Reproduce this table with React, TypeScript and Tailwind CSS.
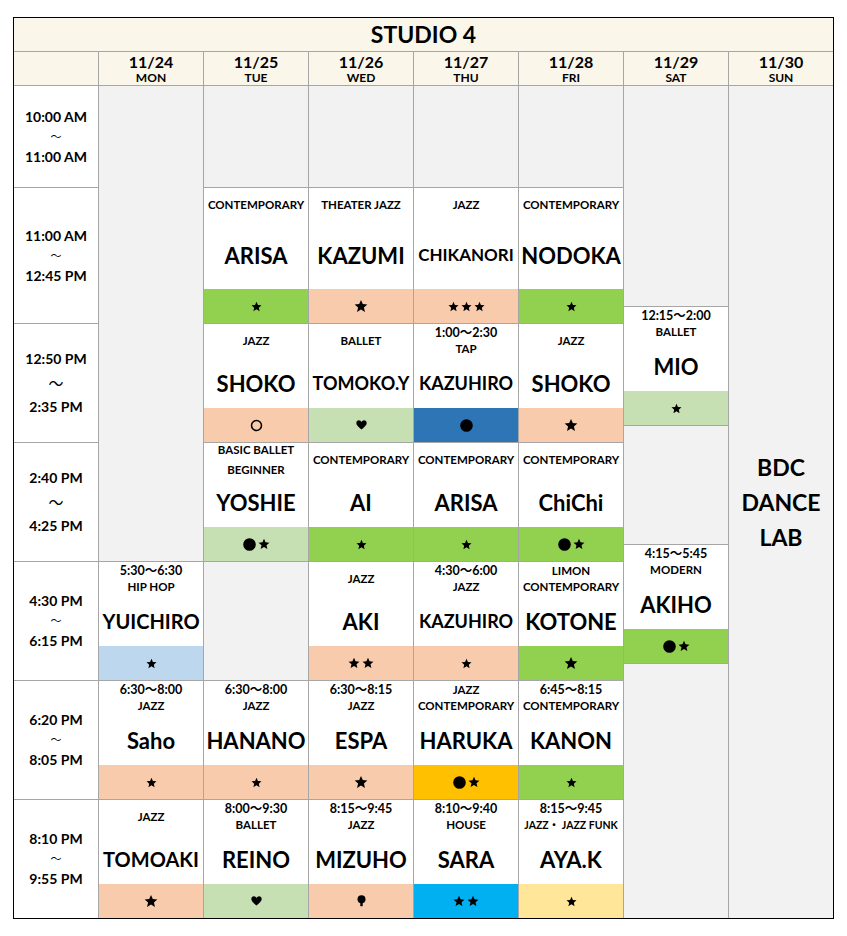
import React from 'react';

type Sym = 's' | 'm' | 'S' | 'dot' | 'ring' | 'heart' | 'balloon';

type Cell = {
  h: string;
  empty?: boolean;
  top?: string[];
  name?: string;
  size?: string;
  band?: string;
  syms?: Sym[];
  tall?: boolean;
  loose?: boolean;
  narrow?: boolean;
};

type Day = { date: string; dow: string; cells: Cell[] };

// row heights (border included)
const R1 = 'h-[102px]';
const R2 = 'h-[136px]';
const R = 'h-[119px]';
const RL = 'h-[118px]';

const PEACH = 'bg-[#f8cbad]';
const GREEN = 'bg-[#92d050]';
const LGREEN = 'bg-[#c6e0b4]';

const SMALL = 'text-[18px]';
const MID = 'text-[20px]';

const days: Day[] = [
  {
    date: '11/24',
    dow: 'MON',
    cells: [
      { h: 'h-[476px]', empty: true },
      { h: R, top: ['5:30～6:30', 'HIP HOP'], name: 'YUICHIRO', size: MID, band: 'bg-[#bdd7ee]', syms: ['s'] },
      { h: R, top: ['6:30～8:00', 'JAZZ'], name: 'Saho', band: PEACH, syms: ['s'] },
      { h: RL, top: ['JAZZ'], name: 'TOMOAKI', size: MID, band: PEACH, syms: ['S'] },
    ],
  },
  {
    date: '11/25',
    dow: 'TUE',
    cells: [
      { h: R1, empty: true },
      { h: R2, tall: true, top: ['CONTEMPORARY'], name: 'ARISA', band: GREEN, syms: ['s'] },
      { h: R, top: ['JAZZ'], name: 'SHOKO', band: PEACH, syms: ['ring'] },
      { h: R, loose: true, top: ['BASIC BALLET', 'BEGINNER'], name: 'YOSHIE', band: LGREEN, syms: ['dot', 'm'] },
      { h: R, empty: true },
      { h: R, top: ['6:30～8:00', 'JAZZ'], name: 'HANANO', band: PEACH, syms: ['s'] },
      { h: RL, top: ['8:00～9:30', 'BALLET'], name: 'REINO', band: LGREEN, syms: ['heart'] },
    ],
  },
  {
    date: '11/26',
    dow: 'WED',
    cells: [
      { h: R1, empty: true },
      { h: R2, tall: true, top: ['THEATER JAZZ'], name: 'KAZUMI', band: PEACH, syms: ['S'] },
      { h: R, top: ['BALLET'], name: 'TOMOKO.Y', size: SMALL, band: LGREEN, syms: ['heart'] },
      { h: R, top: ['CONTEMPORARY'], name: 'AI', band: GREEN, syms: ['s'] },
      { h: R, top: ['JAZZ'], name: 'AKI', band: PEACH, syms: ['m', 'm'] },
      { h: R, top: ['6:30～8:15', 'JAZZ'], name: 'ESPA', band: PEACH, syms: ['S'] },
      { h: RL, top: ['8:15～9:45', 'JAZZ'], name: 'MIZUHO', band: PEACH, syms: ['balloon'] },
    ],
  },
  {
    date: '11/27',
    dow: 'THU',
    cells: [
      { h: R1, empty: true },
      { h: R2, tall: true, top: ['JAZZ'], name: 'CHIKANORI', size: 'text-[17px]', band: PEACH, syms: ['s', 's', 's'] },
      { h: R, top: ['1:00～2:30', 'TAP'], name: 'KAZUHIRO', size: SMALL, band: 'bg-[#2e75b6]', syms: ['dot'] },
      { h: R, top: ['CONTEMPORARY'], name: 'ARISA', band: GREEN, syms: ['s'] },
      { h: R, top: ['4:30～6:00', 'JAZZ'], name: 'KAZUHIRO', size: SMALL, band: PEACH, syms: ['s'] },
      { h: R, top: ['JAZZ', 'CONTEMPORARY'], name: 'HARUKA', band: 'bg-[#ffc000]', syms: ['dot', 'm'] },
      { h: RL, top: ['8:10～9:40', 'HOUSE'], name: 'SARA', band: 'bg-[#00b0f0]', syms: ['m', 'm'] },
    ],
  },
  {
    date: '11/28',
    dow: 'FRI',
    cells: [
      { h: R1, empty: true },
      { h: R2, tall: true, top: ['CONTEMPORARY'], name: 'NODOKA', band: GREEN, syms: ['s'] },
      { h: R, top: ['JAZZ'], name: 'SHOKO', band: PEACH, syms: ['S'] },
      { h: R, top: ['CONTEMPORARY'], name: 'ChiChi', band: GREEN, syms: ['dot', 'm'] },
      { h: R, top: ['LIMON', 'CONTEMPORARY'], name: 'KOTONE', band: GREEN, syms: ['S'] },
      { h: R, top: ['6:45～8:15', 'CONTEMPORARY'], name: 'KANON', band: GREEN, syms: ['s'] },
      { h: RL, narrow: true, top: ['8:15～9:45', 'JAZZ・ JAZZ FUNK'], name: 'AYA.K', band: 'bg-[#ffe699]', syms: ['s'] },
    ],
  },
  {
    date: '11/29',
    dow: 'SAT',
    cells: [
      { h: 'h-[221px]', empty: true },
      { h: R, top: ['12:15～2:00', 'BALLET'], name: 'MIO', band: LGREEN, syms: ['s'] },
      { h: R, empty: true },
      { h: R, top: ['4:15～5:45', 'MODERN'], name: 'AKIHO', band: GREEN, syms: ['dot', 'm'] },
      { h: 'h-[254px]', empty: true },
    ],
  },
];

const times: { h: string; from: string; to: string; loose?: boolean }[] = [
  { h: R1, from: '10:00 AM', to: '11:00 AM' },
  { h: R2, from: '11:00 AM', to: '12:45 PM' },
  { h: R, from: '12:50 PM', to: '2:35 PM', loose: true },
  { h: R, from: '2:40 PM', to: '4:25 PM', loose: true },
  { h: R, from: '4:30 PM', to: '6:15 PM' },
  { h: R, from: '6:20 PM', to: '8:05 PM' },
  { h: RL, from: '8:10 PM', to: '9:55 PM' },
];

const STAR = 'M12 1.5l3.1 7.2 7.8.7-5.9 5.1 1.8 7.7L12 18.1l-6.8 4.1 1.8-7.7-5.9-5.1 7.8-.7z';

const Symbol = ({ s }: { s: Sym }) => {
  if (s === 's' || s === 'm' || s === 'S') {
    const cls = s === 's' ? 'w-[11px] h-[11px]' : s === 'm' ? 'w-[12px] h-[12px]' : 'w-[14px] h-[14px]';
    return (
      <svg className={cls} viewBox="0 0 24 24">
        <path d={STAR} fill="#000" />
      </svg>
    );
  }
  if (s === 'dot') {
    return (
      <svg className="w-[13px] h-[13px]" viewBox="0 0 12 12">
        <circle cx="6" cy="6" r="5.8" fill="#000" />
      </svg>
    );
  }
  if (s === 'ring') {
    return (
      <svg className="w-[13px] h-[13px]" viewBox="0 0 12 12">
        <circle cx="6" cy="6" r="4.6" fill="none" stroke="#000" strokeWidth="1.4" />
      </svg>
    );
  }
  if (s === 'heart') {
    return (
      <svg className="w-[11px] h-[10px]" viewBox="0 0 12 11">
        <path d="M6 10.5C2 7.2 0.3 5.4 0.3 3.3 0.3 1.6 1.6 0.4 3.1 0.4c1.3 0 2.2.8 2.9 1.8C6.7 1.2 7.6.4 8.9.4c1.5 0 2.8 1.2 2.8 2.9 0 2.1-1.7 3.9-5.7 7.2z" fill="#000" />
      </svg>
    );
  }
  return (
    <svg className="w-[9px] h-[12px]" viewBox="0 0 9 12">
      <circle cx="4.5" cy="4.2" r="4" fill="#000" />
      <rect x="3.3" y="7" width="2.4" height="4.2" fill="#000" />
    </svg>
  );
};

const ClassCell = ({ c }: { c: Cell }) => {
  if (c.empty) {
    return <div className={`${c.h} bg-[#f2f2f2] border-b border-[#a6a6a6] last:border-b-0`} />;
  }
  return (
    <div className={`${c.h} flex flex-col bg-white border-b border-[#a6a6a6] last:border-b-0`}>
      <div
        className={`${c.tall ? 'h-[33px]' : 'h-[34px]'} flex flex-col items-center justify-center whitespace-nowrap ${
          c.loose ? 'leading-5' : 'leading-4'
        }`}
      >
        {c.top!.map((t, i) => (
          <div key={i} className={t.includes('～') ? 'text-[12.5px]' : c.narrow ? 'text-[10.5px]' : 'text-[11.5px]'}>
            {t}
          </div>
        ))}
      </div>
      <div className={`flex-1 flex items-center justify-center whitespace-nowrap ${c.size ?? 'text-[22px]'}`}>{c.name}</div>
      <div className={`h-[34px] flex items-center justify-center gap-[2px] ${c.band}`}>
        {c.syms!.map((s, i) => (
          <Symbol key={i} s={s} />
        ))}
      </div>
    </div>
  );
};

export default function App() {
  return (
    <div className="min-h-screen bg-white pt-[17px] pl-[13px] text-black font-bold" style={{ fontFamily: "Lato, 'Noto Sans CJK JP', sans-serif" }}>
      <div className="w-[821px] border border-black">
        <div className="h-[34px] flex items-center justify-center bg-[#faf6ea] border-b border-[#a6a6a6] text-[23px]">
          STUDIO 4
        </div>

        <div className="h-[34px] flex bg-[#faf6ea] border-b border-[#a6a6a6]">
          <div className="w-[85px] border-r border-[#a6a6a6]" />
          {[...days, { date: '11/30', dow: 'SUN', cells: [] }].map((d, i) => (
            <div
              key={d.date}
              className={`${i === 6 ? 'w-[104px]' : 'w-[105px] border-r border-[#a6a6a6]'} flex flex-col items-center justify-center`}
            >
              <div className="text-[16px] leading-[19px]">{d.date}</div>
              <div className="text-[12px] leading-[14px]">{d.dow}</div>
            </div>
          ))}
        </div>

        <div className="flex">
          <div className="w-[85px] flex flex-col border-r border-[#a6a6a6] bg-white">
            {times.map((t) => (
              <div
                key={t.from}
                className={`${t.h} flex flex-col items-center justify-center text-[14px] border-b border-[#a6a6a6] last:border-b-0 ${
                  t.loose ? 'leading-[24px]' : 'leading-5'
                }`}
              >
                <div>{t.from}</div>
                <div className={t.loose ? 'text-[15px] font-normal' : 'text-[11px] font-normal'}>～</div>
                <div>{t.to}</div>
              </div>
            ))}
          </div>

          {days.map((d) => (
            <div key={d.date} className="w-[105px] flex flex-col border-r border-[#a6a6a6]">
              {d.cells.map((c, i) => (
                <ClassCell key={i} c={c} />
              ))}
            </div>
          ))}

          <div className="w-[104px] h-[832px] bg-[#f2f2f2] flex flex-col items-center justify-center text-[23px] leading-[35px]">
            <div>BDC</div>
            <div>DANCE</div>
            <div>LAB</div>
          </div>
        </div>
      </div>
    </div>
  );
}
